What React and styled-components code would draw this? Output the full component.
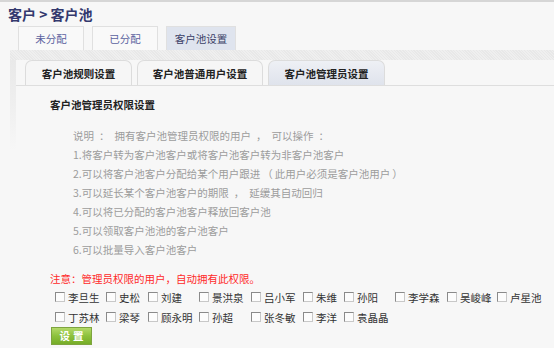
import React from "react";
import styled, { createGlobalStyle } from "styled-components";

const Global = createGlobalStyle`
  html, body { margin: 0; padding: 0; }
  body {
    background: #f7f7f7;
    font-family: "Noto Sans CJK SC", "Noto Sans", sans-serif;
    border-top: 2px solid #d6d6d6;
    width: 554px;
    height: 346px;
    overflow: hidden;
  }
`;

const Page = styled.div`
  display: flex;
  flex-direction: column;
`;

const Title = styled.h1`
  margin: 0;
  padding: 3px 0 0 8px;
  height: 18px;
  font-size: 14px;
  line-height: 18px;
  font-weight: bold;
  color: #34396e;
`;

const TopTabs = styled.div`
  display: flex;
  gap: 8px;
  margin: 3px 0 0 18px;
  height: 24px;
`;

const TopTab = styled.div`
  box-sizing: border-box;
  width: ${(p) => p.$w}px;
  height: 24px;
  border: 1px solid #e0e0e0;
  border-bottom: none;
  background: ${(p) => (p.$active ? "#dfe4ee" : "#f9f9f9")};
  color: ${(p) => (p.$active ? "#3a3f66" : "#5b62a0")};
  font-size: 10.5px;
  line-height: 23px;
  text-align: center;
`;

const Panel = styled.div`
  margin-left: 10px;
  padding: 10px 0 0 6px;
  background-image:
    repeating-linear-gradient(45deg, #e8e8e8 0 1px, #efefef 1px 2px),
    linear-gradient(to bottom, #e9e9e9 0%, #efefef 50%, rgba(247,247,247,0) 100%);
  background-size: 100% 10px, 6px 90px;
  background-position: 0 0, 0 10px;
  background-repeat: no-repeat;
`;

const SubTabs = styled.div`
  display: flex;
  gap: 5px;
  padding-left: 9px;
  height: 25px;
  border-bottom: 1px solid #dedede;
`;

const SubTab = styled.div`
  box-sizing: border-box;
  width: ${(p) => p.$w}px;
  height: 25px;
  border: 1px solid #dcdcdc;
  border-bottom: none;
  border-radius: 7px 7px 0 0;
  background: ${(p) =>
    p.$active
      ? "linear-gradient(to bottom, #eef0f5 0%, #dfe3ec 100%)"
      : "#f6f6f6"};
  color: #222;
  font-weight: bold;
  font-size: 10.5px;
  line-height: 25px;
  text-align: center;
`;

const Content = styled.div`
  padding: 11px 0 0 34px;
`;

const Heading = styled.div`
  font-size: 10.5px;
  font-weight: bold;
  color: #222;
  line-height: 16px;
`;

const Desc = styled.ul`
  list-style: none;
  margin: 13px 0 0 23px;
  padding: 0;
  color: #9c9c9c;
  font-size: 10.5px;
  line-height: 19px;
`;

const Punct = styled.span`
  margin: 0 ${(p) => p.$m}px;
`;

const Note = styled.div`
  margin-top: 12px;
  color: #ff2a2a;
  font-size: 10.5px;
  line-height: 16px;
`;

const Users = styled.div`
  display: grid;
  grid-template-columns: 51px 42px 51px 52px 52px 41px 51px 52px 50px auto;
  row-gap: 4px;
  margin: 2px 0 0 5px;
`;

const User = styled.label`
  display: flex;
  align-items: center;
  gap: 3px;
  height: 16px;
  font-size: 10.5px;
  color: #333;
  white-space: nowrap;
`;

const Box = styled.span`
  box-sizing: border-box;
  width: 10px;
  height: 10px;
  border: 1px solid #c8c8c8;
  border-top-color: #8a8a8a;
  border-left-color: #8a8a8a;
  background: #fcfcfc;
  flex: none;
`;

const Button = styled.button`
  display: block;
  margin: 2px 0 0 1px;
  width: 41px;
  height: 18px;
  padding: 0 0 0 3px;
  border: 1px solid #7ea43f;
  background: linear-gradient(to bottom, #b3d968 0%, #8cc13c 50%, #76ad28 100%);
  color: #fff;
  font-family: inherit;
  font-size: 10.5px;
  font-weight: bold;
  letter-spacing: 3px;
  line-height: 16px;
`;

const descLines = [
  "说明：拥有客户池管理员权限的用户，可以操作：",
  "1.将客户转为客户池客户或将客户池客户转为非客户池客户",
  "2.可以将客户池客户分配给某个用户跟进（此用户必须是客户池用户）",
  "3.可以延长某个客户池客户的期限，延缓其自动回归",
  "4.可以将已分配的客户池客户释放回客户池",
  "5.可以领取客户池池的客户池客户",
  "6.可以批量导入客户池客户",
];

function spaced(line) {
  return line.split(/([：，（）])/).map((part, i) =>
    /^[：，（）]$/.test(part) ? (
      <Punct key={i} $m={/[（）]/.test(part) ? 2 : 5}>
        {part}
      </Punct>
    ) : (
      part
    )
  );
}

const users = [
  "李旦生", "史松", "刘建", "景洪泉", "吕小军", "朱维", "孙阳", "李学森", "吴峻峰", "卢星池",
  "丁苏林", "梁琴", "顾永明", "孙超", "张冬敏", "李洋", "袁晶晶",
];

export default function App() {
  return (
    <Page>
      <Global />
      <Title>客户 &gt; 客户池</Title>
      <TopTabs>
        <TopTab $w={66}>未分配</TopTab>
        <TopTab $w={66}>已分配</TopTab>
        <TopTab $w={70} $active>客户池设置</TopTab>
      </TopTabs>
      <Panel>
        <SubTabs>
          <SubTab $w={107}>客户池规则设置</SubTab>
          <SubTab $w={126}>客户池普通用户设置</SubTab>
          <SubTab $w={117} $active>客户池管理员设置</SubTab>
        </SubTabs>
        <Content>
          <Heading>客户池管理员权限设置</Heading>
          <Desc>
            {descLines.map((l) => (
              <li key={l}>{spaced(l)}</li>
            ))}
          </Desc>
          <Note>注意：管理员权限的用户，自动拥有此权限。</Note>
          <Users>
            {users.map((u) => (
              <User key={u}>
                <Box />
                {u}
              </User>
            ))}
          </Users>
          <Button>设置</Button>
        </Content>
      </Panel>
    </Page>
  );
}
